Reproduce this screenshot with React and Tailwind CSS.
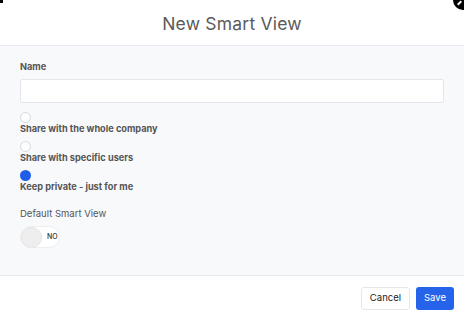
export default function App() {
  const font = { fontFamily: "Inter, 'Noto Sans', sans-serif" };
  return (
    <div className="relative w-[464px] h-[316px] overflow-hidden bg-white text-[#555]" style={font}>
      <div className="absolute left-0 top-0 w-[3px] h-[3px] bg-black" />
      <div className="absolute right-[-9px] top-[-10px] w-[20px] h-[20px] rounded-full bg-black">
        <div className="absolute left-[4px] top-[12px] w-[5px] h-[2px] bg-white rotate-[-45deg]" />
      </div>
      <div className="h-[46px] pt-[3px] flex items-center justify-center border-b border-[#e6e9ee]">
        <h1 className="text-[17.5px] text-[#5a5a5a] font-normal tracking-[0.2px]">New Smart View</h1>
      </div>
      <div className="h-[230px] bg-[#f8f9fb] border-b border-[#e6e9ee] px-5 pt-[14px]">
        <div className="text-[9.2px] font-bold text-[#555] leading-[14px]">Name</div>
        <div className="mt-[5px] h-[24px] bg-white border border-[#e3e6ea] rounded-[2px]" />
        <div className="mt-[9px] flex flex-col">
          <div className="w-[11px] h-[11px] rounded-full border border-[#d6d8dc] bg-white" />
          <div className="text-[9.2px] font-bold leading-[12px]">Share with the whole company</div>
          <div className="mt-[6px] w-[11px] h-[11px] rounded-full border border-[#d6d8dc] bg-white" />
          <div className="text-[9.2px] font-bold leading-[12px]">Share with specific users</div>
          <div className="mt-[6px] w-[11px] h-[11px] rounded-full bg-[#1f5ee8]" />
          <div className="text-[9.2px] font-bold leading-[12px]">Keep private - just for me</div>
        </div>
        <div className="mt-[14px] text-[9.5px] leading-[14px] text-[#555]">Default Smart View</div>
        <div className="mt-[5px] w-[40px] h-[22px] rounded-full bg-white border border-[#eceef1] flex items-center">
          <div className="w-[21px] h-[21px] rounded-full bg-[#eeeeee] border border-[#e2e2e2]" />
          <span className="ml-[5px] text-[7px] font-medium text-[#333]">NO</span>
        </div>
      </div>
      <div className="flex justify-end items-center gap-[6px] px-[10px] pt-[11px]">
        <button className="h-[23px] px-[8px] text-[9.5px] text-[#222] bg-white border border-[#e5e7eb] rounded-[3px]">Cancel</button>
        <button className="h-[23px] px-[8px] text-[9.5px] text-white bg-[#2563eb] rounded-[3px]">Save</button>
      </div>
    </div>
  );
}
